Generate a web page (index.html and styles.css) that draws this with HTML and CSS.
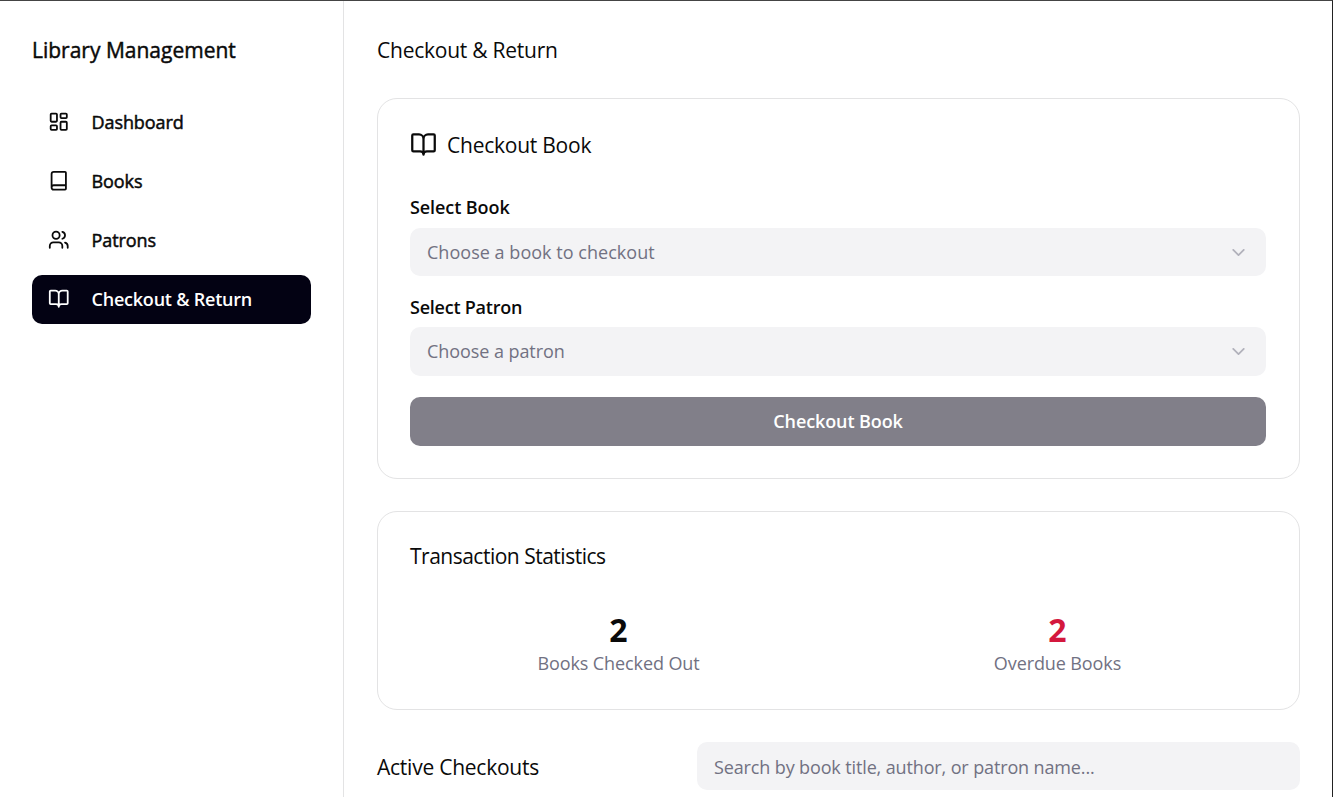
FILE: index.html
```html
<!DOCTYPE html>
<html lang="en">
<head>
<meta charset="utf-8">
<title>Library Management</title>
<link rel="stylesheet" href="styles.css">
</head>
<body>
<div class="app">
  <aside class="sidebar">
    <h1 class="brand">Library Management</h1>
    <nav class="nav">
      <a class="nav-item"><svg class="icon" viewBox="0 0 24 24"><rect x="3" y="3" width="7" height="9" rx="1"/><rect x="14" y="3" width="7" height="5" rx="1"/><rect x="14" y="12" width="7" height="9" rx="1"/><rect x="3" y="16" width="7" height="5" rx="1"/></svg><span>Dashboard</span></a>
      <a class="nav-item"><svg class="icon" viewBox="0 0 24 24"><path d="M4 19.5v-15A2.5 2.5 0 0 1 6.500 2H19a1 1 0 0 1 1 1v18a1 1 0 0 1-1 1H6.500a1 1 0 0 1 0-5H20"/></svg><span>Books</span></a>
      <a class="nav-item"><svg class="icon" viewBox="0 0 24 24"><path d="M16 21v-2a4 4 0 0 0-4-4H6a4 4 0 0 0-4 4v2"/><circle cx="9" cy="7" r="4"/><path d="M22 21v-2a4 4 0 0 0-3-3.870M16 3.130a4 4 0 0 1 0 7.750"/></svg><span>Patrons</span></a>
      <a class="nav-item active"><svg class="icon" viewBox="0 0 24 24"><path d="M12 7v14M3 18a1 1 0 0 1-1-1V4a1 1 0 0 1 1-1h5a4 4 0 0 1 4 4 4 4 0 0 1 4-4h5a1 1 0 0 1 1 1v13a1 1 0 0 1-1 1h-6a3 3 0 0 0-3 3 3 3 0 0 0-3-3z"/></svg><span>Checkout &amp; Return</span></a>
    </nav>
  </aside>
  <main class="main">
    <h2 class="page-title">Checkout &amp; Return</h2>
    <section class="card checkout">
      <h3 class="card-title"><svg class="icon large" viewBox="0 0 24 24"><path d="M12 7v14M3 18a1 1 0 0 1-1-1V4a1 1 0 0 1 1-1h5a4 4 0 0 1 4 4 4 4 0 0 1 4-4h5a1 1 0 0 1 1 1v13a1 1 0 0 1-1 1h-6a3 3 0 0 0-3 3 3 3 0 0 0-3-3z"/></svg><span>Checkout Book</span></h3>
      <div class="label">Select Book</div>
      <div class="select"><span>Choose a book to checkout</span><svg class="icon chevron" viewBox="0 0 24 24"><path d="m6 9 6 6 6-6"/></svg></div>
      <div class="label second">Select Patron</div>
      <div class="select tall"><span>Choose a patron</span><svg class="icon chevron" viewBox="0 0 24 24"><path d="m6 9 6 6 6-6"/></svg></div>
      <button class="submit" disabled>Checkout Book</button>
    </section>
    <section class="card stats">
      <h3 class="stats-title">Transaction Statistics</h3>
      <div class="stats-grid">
        <div class="stat"><div class="value">2</div><div class="caption">Books Checked Out</div></div>
        <div class="stat"><div class="value overdue">2</div><div class="caption">Overdue Books</div></div>
      </div>
    </section>
    <div class="list-header">
      <h3 class="list-title">Active Checkouts</h3>
      <div class="search">Search by book title, author, or patron name...</div>
    </div>
  </main>
</div>
</body>
</html>
```
FILE: styles.css
```css
* { box-sizing: border-box; }
body { margin: 0; overflow: hidden; background: #fff; color: #0a0a0a; font: 400 18px/28px "Open Sans", "Noto Sans", sans-serif; }
h1, h2, h3 { margin: 0; font-weight: 400; font-size: 21px; line-height: 32px; letter-spacing: -.24px; white-space: nowrap; }
.app { display: flex; height: 797px; border-top: 1px solid #444; border-right: 1px solid #222; }
.sidebar { width: 344px; flex: none; border-right: 1px solid #e3e3e4; padding: 33px 32px 0; }
.brand { letter-spacing: 0; -webkit-text-stroke: .45px currentColor; }
.nav { display: flex; flex-direction: column; gap: 10px; margin-top: 32px; }
.nav-item { display: flex; align-items: center; gap: 22px; height: 49px; padding: 0 0 2px 16px; border-radius: 10px; letter-spacing: -.08px; white-space: nowrap; }
.nav-item span { -webkit-text-stroke: .5px currentColor; }
.nav-item.active { background: #030213; color: #fff; font-weight: 600; letter-spacing: -.22px; }
.nav-item.active span { -webkit-text-stroke: 0; }
.icon { width: 21.500px; height: 21.500px; flex: none; fill: none; stroke: currentColor; stroke-width: 2; stroke-linecap: round; stroke-linejoin: round; }
.main { flex: 1; min-width: 0; padding: 33px 32px 0 33px; }
.card { border: 1px solid #e3e3e4; border-radius: 20px; padding: 0 33px 0 32px; }
.checkout { height: 381px; margin-top: 32px; padding-top: 30px; }
.card-title { display: flex; align-items: center; gap: 10px; }
.icon.large { width: 27px; height: 27px; margin-bottom: 2px; }
.label { margin-top: 34px; line-height: 24px; font-weight: 600; letter-spacing: -.08px; }
.label.second { margin-top: 19px; letter-spacing: -.23px; }
.select { display: flex; align-items: center; justify-content: space-between; height: 48px; margin-top: 9px; padding: 0 17px; border-radius: 10px; background: #f3f3f5; color: #717182; letter-spacing: .03px; }
.select.tall { height: 49px; margin-top: 8px; padding-bottom: 1px; letter-spacing: -.07px; }
.icon.chevron { width: 21px; height: 21px; opacity: .5; }
.submit { display: block; width: 100%; height: 49px; margin-top: 21px; border: 0; padding: 0 0 2px; border-radius: 10px; background: #817f89; color: #fff; font: inherit; font-weight: 600; letter-spacing: -.1px; }
.stats { height: 199px; margin-top: 32px; padding-top: 28px; }
.stats-title { letter-spacing: -.5px; }
.stats-grid { display: grid; grid-template-columns: 1fr 1fr; gap: 22px; margin-top: 39px; text-align: center; }
.value { font-size: 32px; line-height: 38px; font-weight: 700; }
.value.overdue { color: #d4183d; }
.caption { color: #717182; letter-spacing: -.1px; }
.list-header { display: flex; align-items: center; justify-content: space-between; margin-top: 32px; }
.list-title { padding-top: 2px; }
.search { width: 603px; height: 48px; line-height: 50px; padding-left: 17px; border-radius: 10px; background: #f3f3f5; color: #717182; letter-spacing: -.13px; }
```
